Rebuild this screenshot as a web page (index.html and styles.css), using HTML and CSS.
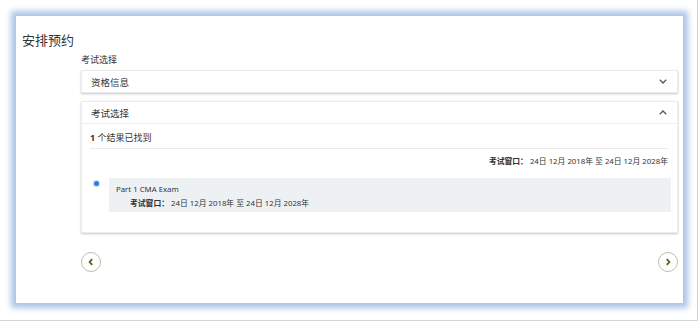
FILE: index.html
```html
<!DOCTYPE html>
<html lang="zh-CN">
<head>
    <meta charset="UTF-8">
    <title>安排预约</title>
    <link rel="stylesheet" href="styles.css">
</head>
<body>
<div class="frame">
    <div class="card">
        <h1 class="title">安排预约</h1>
        <div class="main">
            <p class="label">考试选择</p>

            <div class="panel">
                <div class="panel-head">
                    <span>资格信息</span>
                    <svg class="chev" width="8" height="5" viewBox="0 0 8 5"><polyline points="0.8,0.8 4,4 7.2,0.8" fill="none" stroke="#555" stroke-width="1.3"/></svg>
                </div>
            </div>

            <div class="panel panel-open">
                <div class="panel-head head-line">
                    <span>考试选择</span>
                    <svg class="chev" width="8" height="5" viewBox="0 0 8 5"><polyline points="0.8,4.2 4,1 7.2,4.2" fill="none" stroke="#555" stroke-width="1.3"/></svg>
                </div>
                <div class="panel-body">
                    <p class="found"><b>1</b> 个结果已找到</p>
                    <p class="window-right"><b>考试窗口：</b> 24日 12月 2018年 至 24日 12月 2028年</p>
                    <div class="option">
                        <span class="radio"></span>
                        <div class="option-box">
                            <p class="exam-name">Part 1 CMA Exam</p>
                            <p class="exam-window"><b>考试窗口：</b> 24日 12月 2018年 至 24日 12月 2028年</p>
                        </div>
                    </div>
                </div>
            </div>

            <div class="nav">
                <span class="nav-btn">
                    <svg width="8" height="8" viewBox="0 0 8 8"><polyline points="5.2,1.2 2.6,4 5.2,6.8" fill="none" stroke="#4a6a1e" stroke-width="1.8"/></svg>
                </span>
                <span class="nav-btn">
                    <svg width="8" height="8" viewBox="0 0 8 8"><polyline points="2.8,1.2 5.4,4 2.8,6.8" fill="none" stroke="#4a6a1e" stroke-width="1.8"/></svg>
                </span>
            </div>
        </div>
    </div>
</div>
</body>
</html>
```

FILE: styles.css
```css
html,body,p,div,h1{
    margin: 0;
    padding: 0;
}
body{
    background-color: #ffffff;
    font-family: "Noto Sans", "Noto Sans CJK SC", sans-serif;
    color: #333333;
}
.frame{
    width: 698px;
    height: 321px;
    box-sizing: border-box;
    border-right: 1px solid #d4d4d4;
    border-bottom: 1px solid #d4d4d4;
    padding: 16px 0 0 16px;
}
.card{
    width: 667px;
    height: 287px;
    box-sizing: border-box;
    padding: 14px 5px 0 6px;
    background-color: #ffffff;
    box-shadow: 0 0 6px 5px #aec3e8;
}
.title{
    font-size: 13px;
    font-weight: normal;
    line-height: 20px;
    color: #333333;
}
.main{
    margin-left: 59px;
}
.label{
    font-size: 9px;
    line-height: 14px;
    margin-top: 3px;
}
.panel{
    margin-top: 3px;
    background-color: #ffffff;
    border: 1px solid #ebebeb;
    box-shadow: 0 1px 2px rgba(0,0,0,0.22);
}
.panel-open{
    margin-top: 8px;
}
.panel-head{
    height: 21px;
    display: flex;
    align-items: center;
    justify-content: space-between;
    padding: 0 10px 0 9px;
    font-size: 9.5px;
}
.head-line{
    border-bottom: 1px solid #efefef;
}
.panel-body{
    padding: 0 9px 20px 8px;
    font-size: 7.8px;
}
.found{
    line-height: 14px;
    padding: 7px 0 3px;
    border-bottom: 1px solid #eaeaea;
    font-size: 9px;
}
.window-right{
    text-align: right;
    line-height: 14px;
    margin-top: 5px;
}
.option{
    display: flex;
    margin-top: 10px;
    margin-right: -3px;
}
.radio{
    width: 5px;
    height: 5px;
    border-radius: 50%;
    background-color: #2d7fe6;
    box-shadow: 0 0 1px 1px #c9ddf7;
    margin: 3px 0 0 4px;
    flex: none;
}
.option-box{
    flex: 1;
    margin-left: 10px;
    background-color: #eef1f4;
    padding: 4px 7px 2px;
}
.exam-name{
    line-height: 14px;
}
.exam-window{
    line-height: 14px;
    padding-left: 14px;
}
.nav{
    display: flex;
    justify-content: space-between;
    margin-top: 19px;
}
.nav-btn{
    width: 20px;
    height: 20px;
    box-sizing: border-box;
    border: 1.5px solid #bcc0a4;
    border-radius: 50%;
    display: flex;
    align-items: center;
    justify-content: center;
}
```
